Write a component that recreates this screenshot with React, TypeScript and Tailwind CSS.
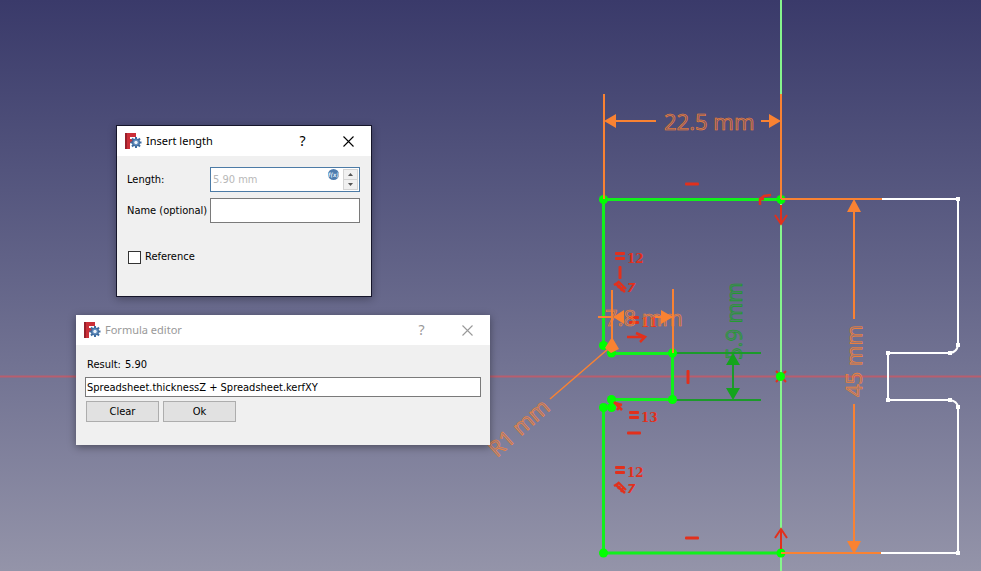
import type { ReactNode } from "react";

const ORANGE = "#f98232";
const RED = "#e2301c";

function AppLogo() {
  return (
    <svg width="17" height="16" viewBox="0 0 17 16" aria-hidden="true">
      <path d="M0 0h11v4H5v2h4v4H5v6H0z" fill="#cb2f38" />
      <path d="M0 0h2v16H0z" fill="#98202b" />
      <path d="M11 4v11M5.500 9.500h11M7 5.500l8 8M15 5.500l-8 8" stroke="#3d6ca3" strokeWidth="2" />
      <circle cx="11" cy="9.500" r="3.700" fill="#5e8abd" stroke="#34618f" strokeWidth="0.800" />
      <circle cx="11" cy="9.500" r="1.700" fill="#eef3f8" />
    </svg>
  );
}

type DialogProps = {
  title: string;
  inactive?: boolean;
  className: string;
  children: ReactNode;
};

function Dialog({ title, inactive, className, children }: DialogProps) {
  return (
    <section
      role="dialog"
      aria-label={title}
      className={`absolute flex flex-col bg-[#f0f0f0] font-['DejaVu_Sans_Condensed','DejaVu_Sans',sans-serif] text-[11px] leading-4 text-black ${className}`}
    >
      <header
        className={`flex h-[30px] shrink-0 items-center bg-white pl-2 font-['Noto_Sans','Open_Sans',sans-serif] ${inactive ? "text-[#999999]" : "text-black"}`}
      >
        <AppLogo />
        <h2 className="ml-1 flex-1">{title}</h2>
        <button type="button" aria-label="Help" className="flex h-full w-[45px] items-center justify-center text-[14px]">
          ?
        </button>
        <button type="button" aria-label="Close" className="flex h-full w-[46px] items-center justify-center">
          <svg width="11" height="11" viewBox="0 0 11 11" stroke="currentColor" strokeWidth="1.100">
            <path d="M.5.5l10 10M10.500.5l-10 10" />
          </svg>
        </button>
      </header>
      {children}
    </section>
  );
}

function InsertLengthDialog() {
  return (
    <Dialog
      title="Insert length"
      className="left-[116px] top-[125px] h-[172px] w-[256px] border border-[#15152a] shadow-[0_2px_8px_rgba(0,0,0,0.3)]"
    >
      <form className="flex flex-col pl-[10px] pr-[11px] pt-[11px]">
        <div className="grid grid-cols-[83px_1fr] items-center gap-y-[6px]">
          <label htmlFor="length">Length:</label>
          <div className="flex h-[25px] border border-[#4c7ba6] bg-white p-px">
            <input
              id="length"
              defaultValue="5.90 mm"
              className="w-0 flex-1 bg-transparent pl-px text-[#b8b8b8] outline-none"
            />
            <button type="button" aria-label="Formula" className="mr-[3px] h-[13px] w-[13px]">
              <svg width="13" height="13" viewBox="0 0 13 13">
                <circle cx="6.500" cy="5.500" r="5.500" fill="#4f7cae" />
                <text x="6.500" y="8" fontSize="6" fontStyle="italic" fontWeight="bold" textAnchor="middle" fill="#dce8f4">
                  f(x)
                </text>
              </svg>
            </button>
            <div className="flex w-[15px] flex-col">
              <button type="button" aria-label="Increase" className="flex flex-1 items-center justify-center border border-[#d4d4d4] bg-[#f0f0f0]">
                <svg width="5" height="3"><path d="M0 3L2.500 0L5 3z" fill="#555555" /></svg>
              </button>
              <button type="button" aria-label="Decrease" className="flex flex-1 items-center justify-center border border-t-0 border-[#d4d4d4] bg-[#f0f0f0]">
                <svg width="5" height="3"><path d="M0 0h5L2.500 3z" fill="#555555" /></svg>
              </button>
            </div>
          </div>
          <label htmlFor="name" className="whitespace-nowrap">Name (optional)</label>
          <input id="name" className="h-[25px] w-full border border-[#7a7a7a] bg-white px-[3px] outline-none" />
        </div>
        <label className="mt-[26px] flex items-center gap-1">
          <input type="checkbox" className="ml-px h-[13px] w-[13px] appearance-none border border-[#333333] bg-white" />
          Reference
        </label>
      </form>
    </Dialog>
  );
}

function FormulaDialog() {
  return (
    <Dialog
      title="Formula editor"
      inactive
      className="left-[76px] top-[315px] h-[130px] w-[414px] shadow-[0_2px_8px_rgba(0,0,0,0.4)]"
    >
      <form className="flex flex-col px-[9px] pt-[12px]">
        <label htmlFor="formula" className="pl-[2px]">
          Result: <output className="ml-px">5.90</output>
        </label>
        <input
          id="formula"
          defaultValue="Spreadsheet.thicknessZ + Spreadsheet.kerfXY"
          className="mt-1 h-[20px] border border-[#7a7a7a] bg-white px-px outline-none"
        />
        <div className="mt-1 flex gap-1 pl-px">
          <button type="button" className="h-[21px] w-[73px] border border-[#adadad] bg-[#e1e1e1]">Clear</button>
          <button type="button" className="h-[21px] w-[73px] border border-[#adadad] bg-[#e1e1e1]">Ok</button>
        </div>
      </form>
    </Dialog>
  );
}

function Equal({ x, y, n }: { x: number; y: number; n: string }) {
  return (
    <g fill={RED}>
      <rect x={x} y={y - 1} width="10" height="3" rx="1" />
      <rect x={x} y={y + 4} width="10" height="3" rx="1" />
      <text x={x + 12} y={y + 10} fontSize="12" fontWeight="bold" fontFamily="'DejaVu Serif', serif">{n}</text>
    </g>
  );
}

function Tangent({ x, y }: { x: number; y: number }) {
  return (
    <g transform={`translate(${x} ${y})`} stroke={RED} fill="none">
      <path d="M-6-1L-1-4M-4-2L5 6" strokeWidth="2.500" />
      <path d="M-2-5L6 3M0-1L-2 2M3 1L1 5" strokeWidth="2" />
    </g>
  );
}

function Sketch() {
  const greenPoints = [
    [603.5, 199.5], [781, 199.5], [603.5, 345.5], [611.5, 353], [672.5, 353], [672.5, 399.5],
    [611.5, 399.5], [603.5, 407.5], [611.5, 407.5], [603.5, 553], [781, 553],
  ];
  const whitePoints = [
    [958, 199], [958, 345], [950, 353], [888, 353], [888, 400], [950, 400], [958, 407], [958, 553],
  ];
  const dim = { fontSize: 22, fontFamily: "'Noto Sans', sans-serif", fillOpacity: 0.3, strokeWidth: 0.6 };
  return (
    <svg width="981" height="571" viewBox="0 0 981 571" className="absolute left-0 top-0" role="img" aria-label="Sketch">
      <path d="M0 376.500H981" stroke="#b85e6e" strokeWidth="2" />
      <path d="M781 0V571" stroke="#86f58c" strokeWidth="2" />

      <path
        d="M882 199H958V345Q957 352 950 353H888V400H950Q957 401 958 407V553H881"
        fill="none" stroke="#ffffff" strokeWidth="2"
      />
      {whitePoints.map(([x, y]) => (
        <rect key={`${x}-${y}`} x={x - 2} y={y - 2} width="4" height="4" fill="#ffffff" />
      ))}

      <path d="M673 353H761M673 400H761M733 358V395" stroke="#1c9a2a" fill="none" strokeWidth="2" />
      <path d="M733 353l-7 12h14zM733 400l-7-12h14z" fill="#14a41c" />

      <path
        d="M781 199.500H603.500V345.500M611.500 353.500H672.500V399.500H611.500M603.500 407.500V553H781"
        stroke="#12f01c" fill="none" strokeWidth="3"
      />

      <g fill={RED}>
        <rect x="685" y="182.500" width="14" height="3" rx="1" />
        <rect x="685" y="536.500" width="14" height="3" rx="1" />
        <rect x="627" y="431.500" width="14" height="3" rx="1" />
        <rect x="618.500" y="266" width="3" height="13" rx="1" />
        <rect x="686.500" y="370" width="3" height="14" rx="1" />
      </g>
      <Equal x={615} y={253} n="12" />
      <Equal x={629} y={317} n="11" />
      <Equal x={629} y={412} n="13" />
      <Equal x={615} y={467} n="12" />
      <Tangent x={620} y={286} />
      <Tangent x={620} y={487} />
      <g fill={RED} fontSize="12" fontWeight="bold" fontStyle="italic" fontFamily="'DejaVu Sans', sans-serif">
        <text x="627" y="292">7</text>
        <text x="627" y="493">7</text>
      </g>
      <g stroke={RED} fill="none" strokeWidth="2.500">
        <path d="M627 337H645M636 333l9 4l-5 5" />
        <path d="M776 371l10 11M786 371l-10 11" strokeWidth="2" />
      </g>

      <g fill="#00ff00">
        {greenPoints.map(([x, y]) => <circle key={`${x}-${y}`} cx={x} cy={y} r="4.500" />)}
        <circle cx="780.500" cy="376.500" r="4.500" />
      </g>
      <g stroke={RED} fill="none" strokeWidth="2">
        <path d="M614 402L622 410M615 403l7 2M617 410l3-4" strokeWidth="2.500" />
        <path d="M781 205V224M775 215l6 9l6-9" />
        <path d="M781 549V529M775 538l6-9l6 9" />
        <path d="M760 205V199L764 196L771 195M759 199H764" strokeWidth="2.500" />
      </g>

      <g stroke={ORANGE} fill="none" strokeWidth="2">
        <path d="M604 94V199M781 94V199M615 121H656M761 121H770" />
        <path d="M781 199H882M781 553H881M854 211V319M854 404V542" />
        <path d="M612 290V346M673 289V353M598 317H612M655 317H673" />
        <path d="M550 399L608 349" strokeWidth="1.500" />
      </g>
      <g fill={ORANGE}>
        <path d="M604 121l12-7v14zM781 121l-12-7v14z" />
        <path d="M854 199l-7 13h14zM854 554l-7-13h14z" />
        <path d="M613 317l11-7v14zM673 317l-12-7v14zM612 337l7 12l-8 4l-6-5z" />
      </g>
      <g fill={ORANGE} stroke={ORANGE}>
        <text x="664" y="130" {...dim}>22.5 mm</text>
        <text x="605" y="326" {...dim}>7.8 mm</text>
        <text transform="translate(862 397) rotate(-90)" {...dim}>45 mm</text>
        <text transform="translate(497 458) rotate(-42)" {...dim}>R1 mm</text>
      </g>
      <text transform="translate(742 360) rotate(-90)" fill="#14a41c" stroke="#14a41c" {...dim}>5.9 mm</text>
    </svg>
  );
}

export default function App() {
  return (
    <main className="relative min-h-screen overflow-hidden bg-linear-to-b from-[#3a3a6a] to-[#9494a9] font-['Noto_Sans','Open_Sans',sans-serif]">
      <Sketch />
      <InsertLengthDialog />
      <FormulaDialog />
    </main>
  );
}
